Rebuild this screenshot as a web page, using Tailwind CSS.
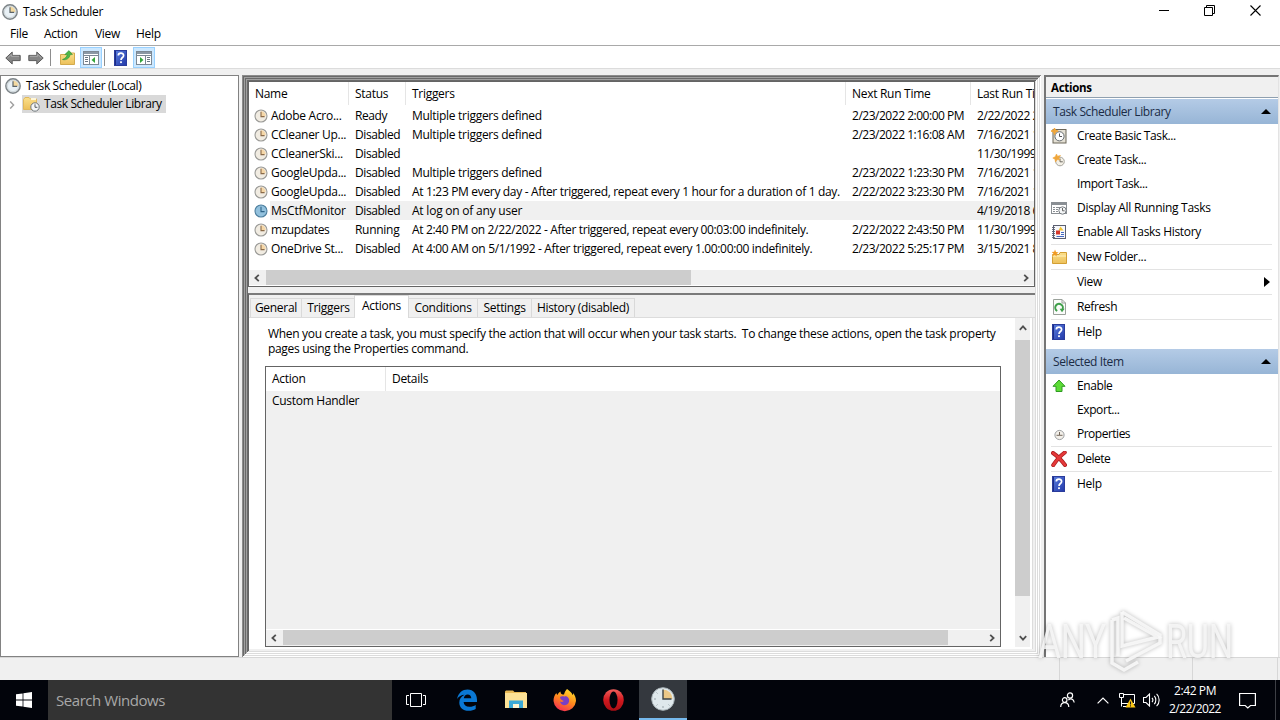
<!DOCTYPE html>
<html lang="en">
<head>
  <meta charset="UTF-8" />
  <meta name="viewport" content="width=device-width, initial-scale=1.0" />
  <title>Task Scheduler</title>
  <script src="https://cdn.jsdelivr.net/npm/@tailwindcss/browser@4"></script>
</head>
<body class="w-[1280px] h-[720px] overflow-hidden flex flex-col bg-[#f0f0f0] text-black text-[12px] leading-[15px] tracking-[-0.29px] whitespace-nowrap font-['Open_Sans','Noto_Sans',sans-serif]">

  <!-- Shared icons -->
  <svg class="absolute size-0">
    <linearGradient id="folderFill" x1="0" y1="0" x2="0" y2="1">
      <stop offset="0" stop-color="#fbe08c" /><stop offset="1" stop-color="#ecc05a" />
    </linearGradient>
    <linearGradient id="helpFill" x1="0" y1="0" x2="1" y2="1">
      <stop offset="0" stop-color="#5a7fe0" /><stop offset="1" stop-color="#2238a8" />
    </linearGradient>
    <symbol id="clock" viewBox="0 0 16 16">
      <circle cx="8" cy="8" r="7.2" fill="#dde3e6" stroke="#7d8488" stroke-width="1.4" />
      <circle cx="8" cy="8" r="5.6" fill="#e9f1f6" stroke="#c5ccd0" stroke-width=".6" />
      <path d="M8 8V2.6A5.4 5.4 0 0 1 13.4 8z" fill="#f3d9a0" />
      <path d="M8 3.2V8.4H12.2" fill="none" stroke="#5c6468" stroke-width="1.2" />
    </symbol>
    <symbol id="taskClock" viewBox="0 0 14 14">
      <circle cx="7" cy="7" r="6" fill="#f1ece2" stroke="#9a9a97" stroke-width="1.1" />
      <path d="M7 7V2.3A4.7 4.7 0 0 1 11.7 7z" fill="#f5d7a8" />
      <path d="M7 2.8V7.6H10.6" fill="none" stroke="#8a6a48" stroke-width="1.1" />
    </symbol>
    <symbol id="taskClockSelected" viewBox="0 0 14 14">
      <circle cx="7" cy="7" r="6" fill="#93c1dd" stroke="#4d7f9f" stroke-width="1.1" />
      <path d="M7 2.8V7.6H10.6" fill="none" stroke="#2f6488" stroke-width="1.1" />
    </symbol>
    <symbol id="help" viewBox="0 0 13 16">
      <rect x=".5" y=".5" width="12" height="15" fill="url(#helpFill)" stroke="#2a3c9c" />
      <path d="M1.5 1V15" stroke="#1c2c86" stroke-width="1" />
      <path d="M4.3 5.6C4.3 2.4 9.6 2.4 9.6 5.4C9.6 7.6 7 7.4 7 10" fill="none" stroke="#fff" stroke-width="1.7" />
      <rect x="6.1" y="11.3" width="1.8" height="1.8" fill="#fff" />
    </symbol>
    <symbol id="arrow" viewBox="0 0 16 14">
      <path d="M.8 7L7.2 1V4.4H15.2V9.6H7.2V13z" fill="#868686" stroke="#5b5b5b" stroke-width="1" />
      <path d="M2.5 7L6.4 3.4V5.3H14" fill="none" stroke="#ababab" />
    </symbol>
    <symbol id="chevron" viewBox="0 0 8 8">
      <path d="M5.8 .8L2.4 4L5.8 7.2" fill="none" stroke="#505050" stroke-width="1.8" />
    </symbol>
  </svg>

  <!-- Title bar -->
  <header class="h-[23px] shrink-0 bg-white flex items-center justify-between">
    <div class="flex items-center pl-[2px] gap-[5px]">
      <svg class="size-4"><use href="#clock" /></svg>
      <span>Task Scheduler</span>
    </div>
    <div class="flex items-center pr-[19px] pb-[2px]">
      <svg class="w-[11px] h-[11px]" viewBox="0 0 11 11"><path d="M0 5.5H10" stroke="#000" /></svg>
      <svg class="w-[11px] h-[11px] ml-[34px]" viewBox="0 0 11 11"><path d="M.5 2.5H8.5V10.5H.5zM2.5 2.5V.5H10.5V8.5H8.5" fill="none" stroke="#000" /></svg>
      <svg class="w-[11px] h-[11px] ml-[35px]" viewBox="0 0 11 11"><path d="M.5 .5L10.5 10.5M10.5 .5L.5 10.5" stroke="#000" stroke-width="1.1" /></svg>
    </div>
  </header>

  <!-- Menu bar -->
  <nav class="h-[23px] shrink-0 bg-white border-b border-[#a9a9a9] flex items-center pl-[10px] pb-px">
    <a class="w-[34px]">File</a>
    <a class="w-[51px]">Action</a>
    <a class="w-[41px]">View</a>
    <a>Help</a>
  </nav>

  <!-- Toolbar -->
  <div class="h-[23px] shrink-0 bg-white border-b border-[#dcdcdc] flex items-center pl-[5px] pt-px">
    <svg class="w-4 h-[14px]"><use href="#arrow" /></svg>
    <svg class="w-4 h-[14px] ml-[7px] -scale-x-100"><use href="#arrow" /></svg>
    <span class="w-px h-[17px] ml-[6px] bg-[#8d8d8d]"></span>
    <svg class="w-[15px] h-[15px] ml-[9px]" viewBox="0 0 15 15">
      <path d="M.5 4.5H6L7 3H14.5V14.5H.5z" fill="url(#folderFill)" stroke="#d3aa4c" />
      <path d="M2.5 9.5C5.5 8.5 7 6.5 7.2 4.6H4.8L9 .6L12.4 4.6H10C9.8 8 6.5 10.6 2.5 9.5z" fill="#4db748" stroke="#2f8f35" stroke-width=".6" />
    </svg>
    <span class="w-[22px] h-[21px] ml-[5px] bg-[#cce8ff] border border-[#99d1ff] flex items-center justify-center">
      <svg class="w-4 h-[14px]" viewBox="0 0 16 14">
        <rect x=".5" y=".5" width="15" height="13" fill="#fff" stroke="#7c8894" />
        <path d="M1 2H15" stroke="#8b98a5" stroke-width="2" /><path d="M1 4.5H15M6.5 4V14" stroke="#7c8894" />
        <path d="M2 6.5H5M2 8.5H5M2 10.5H5" stroke="#6a7682" /><path d="M12 6V12L8.5 9z" fill="#34a53a" />
      </svg>
    </span>
    <span class="w-px h-[17px] ml-[2px] bg-[#8d8d8d]"></span>
    <svg class="w-[13px] h-4 ml-[9px]"><use href="#help" /></svg>
    <span class="w-[22px] h-[21px] ml-[6px] bg-[#cce8ff] border border-[#99d1ff] flex items-center justify-center">
      <svg class="w-4 h-[14px]" viewBox="0 0 16 14">
        <rect x=".5" y=".5" width="15" height="13" fill="#fff" stroke="#7c8894" />
        <path d="M1 2H15" stroke="#8b98a5" stroke-width="2" /><path d="M1 4.5H15M9.5 4V14" stroke="#7c8894" />
        <path d="M11 6.5H14M11 8.5H14M11 10.5H14" stroke="#6a7682" /><path d="M4 6V12L7.5 9z" fill="#34a53a" />
      </svg>
    </span>
  </div>

  <!-- Workspace -->
  <main class="h-[588px] shrink-0 pt-[6px] flex">

    <!-- Console tree -->
    <aside class="w-[239px] h-[582px] bg-white border border-[#828282] pl-[4px] pt-[1px]">
      <div class="h-[18px] flex items-center gap-[5px] tracking-[-0.36px]">
        <svg class="size-4"><use href="#clock" /></svg>
        <span class="pb-px">Task Scheduler (Local)</span>
      </div>
      <div class="h-[18px] flex items-center">
        <svg class="size-[8px] ml-[3px] mt-[2px] -scale-x-100" viewBox="0 0 8 8"><path d="M5.8 .4L2.4 4L5.8 7.6" fill="none" stroke="#a0a0a0" stroke-width="1.4" /></svg>
        <div class="h-[18px] w-[144px] ml-[6px] pl-[1px] flex items-center gap-[4px] bg-[#d9d9d9] tracking-[-0.4px]">
          <svg class="w-[17px] h-4 shrink-0" viewBox="0 0 17 16">
            <path d="M.5 3.5L2 1.5H6L7.5 3H13.5V13.5H.5z" fill="url(#folderFill)" stroke="#e0b85c" />
            <rect x="8" y="2" width="5" height="2" fill="#fff7d8" />
            <circle cx="12" cy="11" r="4.2" fill="#f4f6f7" stroke="#70777b" />
            <path d="M12 8.3V11.3H14.4" fill="none" stroke="#565c60" />
          </svg>
          <span class="pb-px">Task Scheduler Library</span>
        </div>
      </div>
    </aside>

    <!-- Center pane, three stacked sunken edges -->
    <section class="w-[799px] h-[582px] ml-[3px] p-[6px] flex flex-col shadow-[inset_1px_1px_#8c8c8c,inset_-1px_-1px_#fff,inset_2px_2px_#696969,inset_-2px_-2px_#dcdcdc,inset_3px_3px_#a0a0a0,inset_-3px_-3px_#fff,inset_4px_4px_#696969,inset_-4px_-4px_#dcdcdc,inset_5px_5px_#a0a0a0,inset_-5px_-5px_#fff,inset_6px_6px_#696969,inset_-6px_-6px_#dcdcdc]">

      <!-- Task list -->
      <div class="h-[206px] shrink-0 bg-white border border-[#646464] flex flex-col overflow-hidden">
        <div class="h-[24px] shrink-0 grid grid-cols-[100px_57px_440px_125px_63px]">
          <div class="pl-[6px] pt-[4px] h-[23px] border-r border-[#e5e5e5]">Name</div>
          <div class="pl-[6px] pt-[4px] h-[23px] border-r border-[#e5e5e5]">Status</div>
          <div class="pl-[6px] pt-[4px] h-[23px] border-r border-[#e5e5e5]">Triggers</div>
          <div class="pl-[6px] pt-[4px] h-[23px] border-r border-[#e5e5e5]">Next Run Time</div>
          <div class="pl-[6px] pt-[4px] overflow-hidden">Last Run Time</div>
        </div>
        <div class="h-[19px] grid grid-cols-[22px_84px_57px_440px_125px_57px] items-center">
          <svg class="size-[14px] ml-[5px]"><use href="#taskClock" /></svg>
          <span>Adobe Acro...</span><span class="tracking-[-0.42px]">Ready</span><span>Multiple triggers defined</span><span class="tracking-[-0.48px]">2/23/2022 2:00:00 PM</span><span class="overflow-hidden tracking-[-0.44px]">2/22/2022 2:00</span>
        </div>
        <div class="h-[19px] grid grid-cols-[22px_84px_57px_440px_125px_57px] items-center">
          <svg class="size-[14px] ml-[5px]"><use href="#taskClock" /></svg>
          <span>CCleaner Up...</span><span class="tracking-[-0.42px]">Disabled</span><span>Multiple triggers defined</span><span class="tracking-[-0.48px]">2/23/2022 1:16:08 AM</span><span class="overflow-hidden tracking-[-0.44px]">7/16/2021 1:16</span>
        </div>
        <div class="h-[19px] grid grid-cols-[22px_84px_57px_440px_125px_57px] items-center">
          <svg class="size-[14px] ml-[5px]"><use href="#taskClock" /></svg>
          <span>CCleanerSki...</span><span class="tracking-[-0.42px]">Disabled</span><span></span><span></span><span class="overflow-hidden tracking-[-0.44px]">11/30/1999 12</span>
        </div>
        <div class="h-[19px] grid grid-cols-[22px_84px_57px_440px_125px_57px] items-center">
          <svg class="size-[14px] ml-[5px]"><use href="#taskClock" /></svg>
          <span>GoogleUpda...</span><span class="tracking-[-0.42px]">Disabled</span><span>Multiple triggers defined</span><span class="tracking-[-0.48px]">2/23/2022 1:23:30 PM</span><span class="overflow-hidden tracking-[-0.44px]">7/16/2021 1:23</span>
        </div>
        <div class="h-[19px] grid grid-cols-[22px_84px_57px_440px_125px_57px] items-center">
          <svg class="size-[14px] ml-[5px]"><use href="#taskClock" /></svg>
          <span>GoogleUpda...</span><span class="tracking-[-0.42px]">Disabled</span><span class="tracking-[-0.33px]">At 1:23 PM every day - After triggered, repeat every 1 hour for a duration of 1 day.</span><span class="tracking-[-0.48px]">2/22/2022 3:23:30 PM</span><span class="overflow-hidden tracking-[-0.44px]">7/16/2021 1:23</span>
        </div>
        <div class="h-[19px] grid grid-cols-[22px_84px_57px_440px_125px_57px] items-center bg-linear-to-r from-white from-[21px] to-[#f0f0f0] to-[21px]">
          <svg class="size-[14px] ml-[5px]"><use href="#taskClockSelected" /></svg>
          <span class="tracking-[-0.2px]">MsCtfMonitor</span><span class="tracking-[-0.42px]">Disabled</span><span class="tracking-[-0.22px]">At log on of any user</span><span></span><span class="overflow-hidden tracking-[-0.44px]">4/19/2018 6:10</span>
        </div>
        <div class="h-[19px] grid grid-cols-[22px_84px_57px_440px_125px_57px] items-center">
          <svg class="size-[14px] ml-[5px]"><use href="#taskClock" /></svg>
          <span class="tracking-[-0.44px]">mzupdates</span><span>Running</span><span class="tracking-[-0.36px]">At 2:40 PM on 2/22/2022 - After triggered, repeat every 00:03:00 indefinitely.</span><span class="tracking-[-0.48px]">2/22/2022 2:43:50 PM</span><span class="overflow-hidden tracking-[-0.44px]">11/30/1999 12</span>
        </div>
        <div class="h-[19px] grid grid-cols-[22px_84px_57px_440px_125px_57px] items-center">
          <svg class="size-[14px] ml-[5px]"><use href="#taskClock" /></svg>
          <span>OneDrive St...</span><span class="tracking-[-0.42px]">Disabled</span><span class="tracking-[-0.35px]">At 4:00 AM on 5/1/1992 - After triggered, repeat every 1.00:00:00 indefinitely.</span><span class="tracking-[-0.48px]">2/23/2022 5:25:17 PM</span><span class="overflow-hidden tracking-[-0.44px]">3/15/2021 8:25</span>
        </div>
        <div class="h-[15px] mt-auto mb-px bg-[#f0f0f0] flex items-center">
          <svg class="size-[8px] ml-[4px]"><use href="#chevron" /></svg>
          <div class="w-[425px] h-full ml-[5px] bg-[#cdcdcd]"></div>
          <svg class="size-[8px] ml-auto mr-[4px] -scale-x-100"><use href="#chevron" /></svg>
        </div>
      </div>

      <!-- Task details -->
      <div class="flex-1 mt-[6px] border-t-2 border-[#7a7a7a] border-l border-l-[#646464] flex flex-col">
        <div class="h-[23px] shrink-0 flex items-end pl-px border-b border-[#dcdcdc]">
          <div class="w-[52px] h-[19px] border border-b-0 border-[#d9d9d9] text-center pt-px">General</div>
          <div class="w-[52px] h-[19px] border-t border-[#d9d9d9] text-center pt-px pl-px">Triggers</div>
          <div class="w-[55px] h-[23px] -mb-px bg-white border border-b-0 border-[#d9d9d9] text-center pt-[2px]">Actions</div>
          <div class="w-[69px] h-[19px] border-t border-r border-[#d9d9d9] text-center pt-px">Conditions</div>
          <div class="w-[54px] h-[19px] border-t border-r border-[#d9d9d9] text-center pt-px">Settings</div>
          <div class="w-[103px] h-[19px] border-t border-r border-[#d9d9d9] text-center pt-px">History (disabled)</div>
        </div>
        <div class="flex-1 mr-[2px] mb-[2px] bg-white border-r border-[#dcdcdc] flex">
          <div class="w-[766px] pl-[16px] pt-[8px]">
            <p class="pl-[3px] tracking-[-0.32px]">When you create a task, you must specify the action that will occur when your task starts.&nbsp; To change these actions, open the task property<br />pages using the Properties command.</p>
            <div class="w-[736px] h-[281px] mt-[10px] border border-[#646464] bg-[#f0f0f0] flex flex-col">
              <div class="h-[24px] bg-white flex">
                <div class="w-[120px] h-full pl-[6px] pt-[4px] border-r border-[#e5e5e5]">Action</div>
                <div class="pl-[6px] pt-[4px]">Details</div>
              </div>
              <div class="h-[19px] pl-[6px] flex items-center">Custom Handler</div>
              <div class="h-[16px] mt-auto mb-px flex items-center border-t border-white">
                <svg class="size-[8px] ml-[4px]"><use href="#chevron" /></svg>
                <div class="w-[665px] h-full ml-[5px] bg-[#cdcdcd]"></div>
                <svg class="size-[8px] ml-auto mr-[4px] -scale-x-100"><use href="#chevron" /></svg>
              </div>
            </div>
          </div>
          <div class="w-[15px] h-[329px] bg-[#f0f0f0] flex flex-col items-center">
            <svg class="size-[8px] mt-[6px] rotate-90"><use href="#chevron" /></svg>
            <div class="w-full h-[256px] mt-[8px] bg-[#cdcdcd]"></div>
            <svg class="size-[8px] mt-auto mb-[5px] -rotate-90"><use href="#chevron" /></svg>
          </div>
        </div>
      </div>
    </section>

    <!-- Actions pane -->
    <aside class="w-[235px] h-[582px] ml-[3px] bg-white border-t-2 border-l-2 border-[#757575] border-r border-r-[#e3e3e3]">
      <h2 class="h-[21px] bg-[#f0f0f0] border-b border-[#8fa0b0] pl-[5px] pt-[3px] font-bold text-[11.5px]">Actions</h2>
      <div class="h-[25px] mt-px bg-linear-to-b from-[#b4cbe6] to-[#97b5d6] text-[#1a2b45] flex items-center justify-between pl-[7px] pr-[7px] tracking-[-0.4px]">
        <span>Task Scheduler Library</span>
        <svg class="w-[10px] h-[5px]" viewBox="0 0 10 5"><path d="M0 5L5 0L10 5z" fill="#000" /></svg>
      </div>
      <div class="h-[24px] flex items-center pl-[5px]">
        <svg class="size-4" viewBox="0 0 16 16">
          <rect x="2" y="1.5" width="13" height="13.5" fill="#e4e0d4" stroke="#6b6659" />
          <circle cx="8.5" cy="8.3" r="4.6" fill="#fff" stroke="#62686c" />
          <path d="M8.5 5.5V8.5H11" fill="none" stroke="#555" />
          <path d="M3.5 0L4.5 2.2L7.2 3L4.5 4L3.5 6.8L2.6 4L0 3L2.6 2.2z" fill="#f0a63a" stroke="#f0a63a" />
        </svg>
        <span class="ml-[10px] pb-px tracking-[-0.4px]">Create Basic Task...</span>
      </div>
      <div class="h-[24px] flex items-center pl-[5px]">
        <svg class="size-4" viewBox="0 0 16 16">
          <circle cx="9" cy="9.5" r="4.3" fill="#f4f0e6" stroke="#a5a49c" />
          <path d="M9 6.5V9.8H11.8" fill="none" stroke="#6d6a62" />
          <path d="M5.5 2L6.5 4.2L9.5 3.5L7.8 6L9 8L6 7.6L4.5 10L4 7.2L1.8 6L4.2 4.8z" fill="#f0a63a" stroke="#f0a63a" stroke-width=".6" />
        </svg>
        <span class="ml-[10px] pb-px tracking-[-0.4px]">Create Task...</span>
      </div>
      <div class="h-[24px] flex items-center pl-[31px]"><span class="pb-px tracking-[-0.4px]">Import Task...</span></div>
      <div class="h-[24px] flex items-center pl-[5px]">
        <svg class="size-4" viewBox="0 0 16 16">
          <rect x=".5" y="2.5" width="15" height="11" fill="#fff" stroke="#8a8f94" />
          <path d="M1 4H15" stroke="#8a8f94" stroke-width="2" />
          <path d="M2 7.5H4M5 7.5H9M2 9.5H4M5 9.5H7M2 11.5H4M5 11.5H7" stroke="#8a8f94" />
          <circle cx="11.5" cy="10.5" r="3.7" fill="#f4f6f7" stroke="#767b80" />
          <path d="M11.5 8V10.8H13.6" fill="none" stroke="#666" />
        </svg>
        <span class="ml-[10px] pb-px">Display All Running Tasks</span>
      </div>
      <div class="h-[24px] flex items-center pl-[5px]">
        <svg class="size-4" viewBox="0 0 16 16">
          <rect x="2.5" y="1.5" width="12" height="13" fill="#f7f8fb" stroke="#5a5f70" />
          <path d="M1 3.5H4M1 5.5H4M1 7.5H4M1 9.5H4M1 11.5H4M1 13.5H4" stroke="#5a5f70" stroke-width=".9" />
          <path d="M9.5 2.5L12.5 6.5H7.5z" fill="#f2c230" />
          <rect x="5" y="6.5" width="4" height="4" fill="#d4382c" />
          <path d="M10 8.5H13M5.5 12.5H13M10 10.5H13" stroke="#4468c0" />
        </svg>
        <span class="ml-[10px] pb-px tracking-[-0.33px]">Enable All Tasks History</span>
      </div>
      <hr class="ml-[5px] mr-[6px] border-[#e3e3e3]" />
      <div class="h-[24px] flex items-center pl-[5px]">
        <svg class="size-4" viewBox="0 0 16 16">
          <path d="M1.5 5.5V14.5H15.5V3.5H9L8 5.5z" fill="url(#folderFill)" stroke="#d39f33" />
          <path d="M1.5 7H15" stroke="#fff1bd" />
          <path d="M4 .5L5 3L7.6 3.5L5.4 5L5.8 7.5L3.8 6L1.5 7L2.4 4.6L.6 3L3.2 2.8z" fill="#f09a22" />
        </svg>
        <span class="ml-[10px] pb-px">New Folder...</span>
      </div>
      <hr class="ml-[5px] mr-[6px] border-[#e3e3e3]" />
      <div class="h-[24px] flex items-center justify-between pl-[31px] pr-[8px]">
        <span class="pb-px">View</span>
        <svg class="w-[6px] h-[10px]" viewBox="0 0 6 10"><path d="M0 0L6 5L0 10z" fill="#000" /></svg>
      </div>
      <hr class="ml-[5px] mr-[6px] border-[#e3e3e3]" />
      <div class="h-[24px] flex items-center pl-[5px]">
        <svg class="size-4" viewBox="0 0 16 16">
          <path d="M2.5 .5H11L14.5 4V15.5H2.5z" fill="#fbfcfb" stroke="#9aa19a" />
          <path d="M11 .5V4H14.5" fill="none" stroke="#9aa19a" />
          <path d="M6.2 12A3.8 3.8 0 1 1 11.4 10.5" fill="none" stroke="#3f9f4a" stroke-width="2" />
          <path d="M8.6 9.8H13.6L11 13.3z" fill="#3f9f4a" />
        </svg>
        <span class="ml-[10px] pb-px tracking-[-0.4px]">Refresh</span>
      </div>
      <hr class="ml-[5px] mr-[6px] border-[#e3e3e3]" />
      <div class="h-[24px] flex items-center pl-[6px]">
        <svg class="w-[13px] h-4"><use href="#help" /></svg>
        <span class="ml-[12px] pb-px">Help</span>
      </div>
      <div class="h-[25px] mt-[5px] bg-linear-to-b from-[#b4cbe6] to-[#97b5d6] text-[#1a2b45] flex items-center justify-between pl-[7px] pr-[7px] tracking-[-0.4px]">
        <span>Selected Item</span>
        <svg class="w-[10px] h-[5px]" viewBox="0 0 10 5"><path d="M0 5L5 0L10 5z" fill="#000" /></svg>
      </div>
      <div class="h-[24px] flex items-center pl-[5px]">
        <svg class="size-4" viewBox="0 0 16 16"><path d="M8 2L14 8.3H11V13.5H5V8.3H2z" fill="#5ddc36" stroke="#2f9a22" /></svg>
        <span class="ml-[10px] pb-px tracking-[-0.4px]">Enable</span>
      </div>
      <div class="h-[24px] flex items-center pl-[31px]"><span class="pb-px tracking-[-0.4px]">Export...</span></div>
      <div class="h-[24px] flex items-center pl-[5px]">
        <svg class="size-4" viewBox="0 0 16 16">
          <circle cx="8.5" cy="9" r="4.6" fill="#f2efe9" stroke="#9c9fa2" />
          <path d="M8.5 6V9.3H11.5M5.5 9.3H8.5" fill="none" stroke="#74675a" />
        </svg>
        <span class="ml-[10px] pb-px tracking-[-0.5px]">Properties</span>
      </div>
      <hr class="ml-[5px] mr-[6px] border-[#e3e3e3]" />
      <div class="h-[24px] flex items-center pl-[5px]">
        <svg class="size-4" viewBox="0 0 16 16">
          <path d="M2 2C5 4 11 10 14 14M13.8 1.5C9 5 5 10 2.2 14.2" fill="none" stroke="#a81e1e" stroke-width="4" stroke-linecap="round" />
          <path d="M2 2C5 4 11 10 14 14M13.8 1.5C9 5 5 10 2.2 14.2" fill="none" stroke="#e5393a" stroke-width="2.6" stroke-linecap="round" />
        </svg>
        <span class="ml-[10px] pb-px tracking-[-0.5px]">Delete</span>
      </div>
      <hr class="ml-[5px] mr-[6px] border-[#e3e3e3]" />
      <div class="h-[24px] flex items-center pl-[6px]">
        <svg class="w-[13px] h-4"><use href="#help" /></svg>
        <span class="ml-[12px] pb-px">Help</span>
      </div>
    </aside>
  </main>

  <!-- Status bar -->
  <div class="h-[23px] shrink-0 border-t border-[#d7d7d7] flex justify-end pr-[2px]">
    <span class="w-[133px] border-l border-[#d7d7d7]"></span>
    <span class="w-[86px] border-l border-r border-[#d7d7d7]"></span>
  </div>

  <!-- Taskbar -->
  <footer class="h-[40px] shrink-0 bg-[#02040b] text-white flex items-center">
    <div class="w-[48px] flex justify-center">
      <svg class="size-4" viewBox="0 0 16 16"><path d="M0 2.3L6.6 1.4V7.6H0zM7.4 1.3L16 0V7.6H7.4zM0 8.4H6.6V14.6L0 13.7zM7.4 8.4H16V16L7.4 14.7z" fill="#fff" /></svg>
    </div>
    <div class="w-[344px] h-full bg-[#333] text-[#a8a8a8] text-[15px] tracking-[-0.45px] flex items-center pl-[8px] pt-px">Search Windows</div>
    <div class="w-[48px] flex justify-center">
      <svg class="w-5 h-[14px]" viewBox="0 0 20 14"><path d="M4.5 .5H15.5V13.5H4.5zM3 2.5H.5V11.5H3M17 2.5H19.5V11.5H17" fill="none" stroke="#fff" /></svg>
    </div>
    <div class="w-[54px] flex justify-center">
      <svg class="w-5 h-[22px]" viewBox="0 0 20 22">
        <path d="M0 10C1.5 3.5 5.5 .5 10.5 .5C16.5 .5 20 5 20 11V13H6.6C6.8 16 9 17.8 12.5 17.8C15 17.8 17 17.1 18.7 16V20C16.8 21.2 14.5 21.8 11.8 21.8C5.6 21.8 2.3 18.3 2.3 13.5C2.3 10.3 4.2 7.3 7.5 5.8C4.4 5.9 1.8 7.3 0 10zM6.8 9.3H14.3C14.2 7.2 12.8 5.6 10.6 5.6C8.5 5.6 7.2 7.2 6.8 9.3z" fill="#0a78d4" />
      </svg>
    </div>
    <div class="w-[44px] flex justify-center">
      <svg class="w-[22px] h-5" viewBox="0 0 22 20">
        <path d="M0 1.5L1 .5H8L9.5 2H21V4H0z" fill="#e8b955" />
        <rect y="3" width="22" height="15" fill="#fce196" />
        <path d="M4 18V10.5H18V18H14V14H8V18z" fill="#3ba9d6" /><path d="M8 18V14H14V18z" fill="#fff4d0" />
      </svg>
    </div>
    <div class="w-[54px] pr-[2px] flex justify-center">
      <svg class="w-[23px] h-[23px]" viewBox="0 0 23 23">
        <linearGradient id="fox" x1=".8" y1="0" x2=".3" y2="1"><stop offset="0" stop-color="#ffe22e" /><stop offset=".5" stop-color="#ff8a1c" /><stop offset="1" stop-color="#f52c52" /></linearGradient>
        <path d="M14 0C18 3 19 4 19.5 6C20.5 5.5 20.2 4.5 20 3.8C22 6.5 23 9 23 12A11.3 11.3 0 0 1 .5 12C.5 8.5 1.5 6 3.5 4C3.5 5 4 5.5 4.5 6C5 4.5 6 3.5 7.5 2.5C7.5 4 8 5 9.5 5.5H11C11.5 3.5 12.5 1.5 14 0z" fill="url(#fox)" />
        <path d="M7 8C9 6.3 12 8.4 12.5 7C16.5 8 17 12 15.2 14.5C12.5 17.5 7.6 16.2 7 12.5C8.2 13.3 9.8 12.8 10.8 12C9.5 11 7.4 11.3 7 8z" fill="#7a3fc4" />
      </svg>
    </div>
    <div class="w-[47px] pr-[4px] flex justify-center">
      <svg class="w-[21px] h-[22px]" viewBox="0 0 21 22">
        <linearGradient id="operaFill" x1="0" y1="0" x2="0" y2="1"><stop offset="0" stop-color="#f0605c" /><stop offset=".5" stop-color="#d2191f" /><stop offset="1" stop-color="#a80e14" /></linearGradient>
        <ellipse cx="10.5" cy="11" rx="10.3" ry="10.8" fill="url(#operaFill)" />
        <ellipse cx="10.5" cy="11" rx="4" ry="8.4" fill="#02040b" />
      </svg>
    </div>
    <div class="w-[48px] h-full bg-[#34383e] border-b-2 border-[#76b9ed] flex items-center justify-center">
      <svg class="size-6" viewBox="0 0 24 24">
        <circle cx="12" cy="12" r="11.3" fill="#dfe8ec" stroke="#a9b3b8" />
        <path d="M12 12V2.5A9.5 9.5 0 0 1 21.5 12z" fill="#ecc887" />
        <path d="M12 2.5V12H20.5" fill="none" stroke="#3c4347" stroke-width="1.4" />
        <path d="M12 19V21M3 12H5M5.5 5.5L6.5 6.5M5.5 18.5L6.5 17.5M18.5 18.5L17.5 17.5" stroke="#98a4aa" />
      </svg>
    </div>

    <!-- Tray -->
    <div class="ml-auto h-full flex items-center">
      <svg class="w-[15px] h-4" viewBox="0 0 15 16"><g fill="none" stroke="#fff" stroke-width="1.2"><circle cx="10" cy="3.5" r="2.6" /><circle cx="4.7" cy="8" r="2.3" /><path d="M.7 15C.9 9.2 8.6 9.2 8.8 15M8.4 8.2C10.6 5.8 13.8 7 14.2 10.5" /></g></svg>
      <svg class="w-[12px] h-[7px] ml-[22px]" viewBox="0 0 12 7"><path d="M.6 6.4L6 1L11.4 6.4" fill="none" stroke="#fff" stroke-width="1.2" /></svg>
      <svg class="w-[17px] h-4 ml-[10px]" viewBox="0 0 17 16">
        <path d="M5 2.5H15.5V11.5H5M2.5 5V14.5M2.5 11.5H5M.5 1.5H4.5V5.5H.5zM4 14.5H8" fill="none" stroke="#fff" />
        <path d="M11.5 6.5L16.5 15.5H6.5z" fill="#f9c515" /><path d="M11.5 9.5V12.5M11.5 13.3V14.5" stroke="#222" />
      </svg>
      <svg class="w-[17px] h-[14px] ml-[7px]" viewBox="0 0 17 14"><path d="M.5 4.5H3L6.5 1V13L3 9.5H.5zM9 4.8C10 6 10 8 9 9.2M11.3 2.8C13.3 5 13.3 9 11.3 11.2M13.6 .8C17 4 17 10 13.6 13.2" fill="none" stroke="#fff" stroke-width="1.1" /></svg>
      <div class="w-[70px] text-center leading-[18px] tracking-[-0.4px]">2:42 PM<br /><span class="tracking-[-0.55px]">2/22/2022</span></div>
      <svg class="w-[17px] h-[17px] ml-[9px] mr-[19px]" viewBox="0 0 17 17"><path d="M.6 1.5H16.4V13.5H11.5L8.8 16L6.2 13.5H.6z" fill="none" stroke="#fff" stroke-width="1.2" /></svg>
      <span class="w-px h-full mr-[4px] bg-[#3d3f45]"></span>
    </div>
  </footer>

  <!-- Watermark -->
  <svg class="absolute left-[1034px] top-[604px] w-[206px] h-[74px] drop-shadow-[0_0_2px_rgba(0,0,0,0.3)]" viewBox="0 0 206 74">
    <g font-family="Roboto, sans-serif" font-size="49" fill="#f8f8f8" fill-opacity=".85">
      <text x="4" y="54" textLength="68" lengthAdjust="spacingAndGlyphs">ANY</text>
      <text x="132" y="54" textLength="67" lengthAdjust="spacingAndGlyphs">RUN</text>
    </g>
    <g fill="none" stroke="#f8f8f8" stroke-opacity=".9" stroke-width="3.5">
      <path d="M88 8L126 31V39L92 57" />
      <path d="M88 8V42L124 33L90 14" />
      <path d="M78 16V59L90 66L104 58M78 16L84 14V52" />
    </g>
  </svg>
</body>
</html>
